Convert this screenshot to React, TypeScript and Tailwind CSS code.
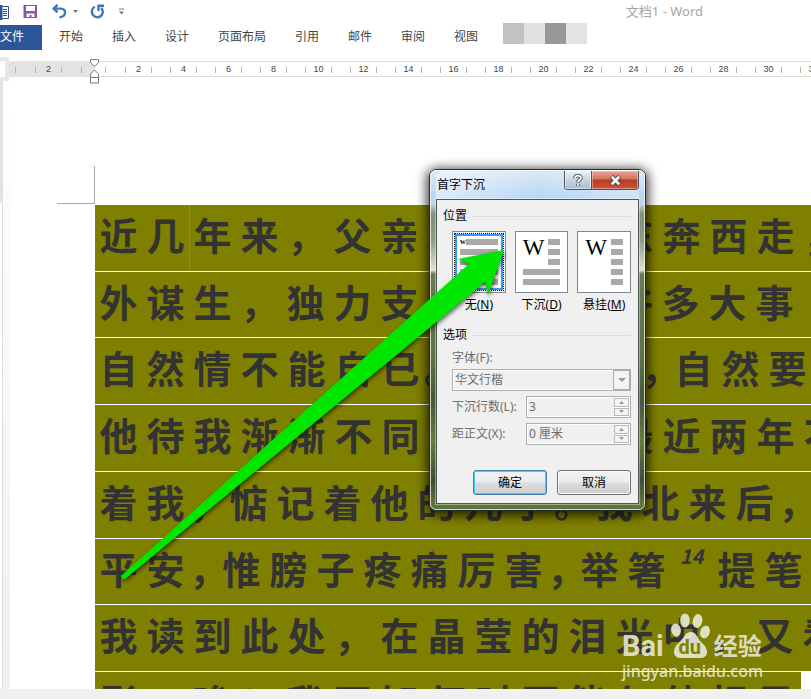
import React, { useState } from 'react';
import clsx from 'clsx';

const tabs = ['开始', '插入', '设计', '页面布局', '引用', '邮件', '审阅', '视图'];

const rulerMarks = [2, 4, 6, 8, 10, 12, 14, 16, 18, 20, 22, 24, 26, 28, 30, 32];

type Stop = 'wide' | 'medium' | 'narrow';

const lines: { text: string; stop: Stop; note?: string; rest?: string }[] = [
  { text: '近几年来，父亲和我都是东奔西走，', stop: 'wide' },
  { text: '外谋生，独力支持，做了许多大事', stop: 'wide' },
  { text: '自然情不能自已。情郁于中，自然要', stop: 'narrow' },
  { text: '他待我渐渐不同往日。但最近两年不', stop: 'wide' },
  { text: '着我，惦记着他的儿子。我北来后，', stop: 'medium' },
  { text: '平安，惟膀子疼痛厉害，举箸', stop: 'narrow', note: '14', rest: '提笔' },
  { text: '我读到此处，在晶莹的泪光中，又看', stop: 'wide' },
  { text: '影。唉！我不知何时再能与他相见', stop: 'wide' },
];

const positions = [
  { id: 'none', name: '无', key: 'N' },
  { id: 'dropped', name: '下沉', key: 'D' },
  { id: 'margin', name: '悬挂', key: 'M' },
];

function QuickAccess() {
  return (
    <div className="flex h-[23px] items-center">
      <svg className="h-4 w-[9px] shrink-0" viewBox="0 0 9 16" aria-hidden="true">
        <path d="M2.5 2.5h6v12h-6" fill="#fff" stroke="#2b579a" />
        <path d="M3 5.5h4M3 7.5h4M3 9.5h4M3 11.5h4" stroke="#2b579a" />
        <path d="M0 1h2.500v15H0z" fill="#2b579a" />
      </svg>
      <button type="button" aria-label="保存" className="ml-3.5 shrink-0">
        <svg width="15" height="15" viewBox="0 0 15 15">
          <path d="M.5 1h13.500v13H.5z" fill="#8757a8" />
          <path d="M3 2h9v5H3z" fill="#fff" />
          <path d="M3.500 9.500h8V13h-3v-2h-2v2h-3z" fill="#fff" />
        </svg>
      </button>
      <button type="button" aria-label="撤消" className="ml-3.5 flex shrink-0 items-center gap-1.5">
        <svg width="15" height="15" viewBox="0 0 15 15" fill="none" stroke="#3f76b5" strokeWidth="2.400">
          <path d="M5.500 .8L1.600 4.600l4 3.800M2 4.600h7c5.500 0 5.800 8.200-1.500 8.600" />
        </svg>
        <svg width="5" height="3" viewBox="0 0 5 3">
          <path d="M0 0h5L2.500 3z" fill="#777" />
        </svg>
      </button>
      <button type="button" aria-label="重复" className="ml-3 shrink-0">
        <svg width="15" height="15" viewBox="0 0 15 15" fill="none" stroke="#3f76b5" strokeWidth="2.400">
          <path d="M4.800 2.800a5.500 5.500 0 1 0 6.400 1" />
          <path d="M8.500 7V1.800H14" />
        </svg>
      </button>
      <button type="button" aria-label="自定义快速访问工具栏" className="ml-3.5 shrink-0">
        <svg width="5" height="7" viewBox="0 0 5 7">
          <path d="M0 1h5" stroke="#777" />
          <path d="M0 3.500h5L2.500 6.500z" fill="#777" />
        </svg>
      </button>
      <h1 className="ml-auto mr-[108px] text-[13px] whitespace-nowrap text-[#a6a6a6]">文档1 - Word</h1>
    </div>
  );
}

function Ribbon() {
  return (
    <nav className="flex h-[27px] items-end text-xs text-[#444]">
      <a href="#file" className="flex h-[25px] w-[42px] shrink-0 items-center bg-[#2b579a] pb-0.5 text-white">
        文件
      </a>
      <div className="flex h-[25px] shrink-0 items-center gap-[29px] pb-0.5 pl-[17px]">
        {tabs.map((tab) => (
          <a key={tab} href={`#${tab}`} className="whitespace-nowrap">
            {tab}
          </a>
        ))}
      </div>
      <div className="ml-[25px] flex h-[21px] shrink-0 self-start">
        <span className="w-[21px] bg-[#c2c2c2]" />
        <span className="w-[21px] bg-[#e1e1e1]" />
        <span className="w-[21px] bg-[#989898]" />
        <span className="w-[21px] bg-[#e3e3e3]" />
      </div>
    </nav>
  );
}

function RulerCell({ mark }: { mark: number }) {
  return (
    <span className="flex w-[45px] shrink-0 items-center justify-center gap-1">
      <i className="h-1.5 w-px bg-[#b5b5b5]" />
      <span className="w-[17px] text-center">{mark}</span>
      <i className="h-1.5 w-px bg-[#b5b5b5]" />
    </span>
  );
}

function Ruler() {
  return (
    <div className="relative mt-[7px] flex h-6 items-center font-['Liberation_Sans'] text-[9px] text-[#444]">
      <div className="h-6 w-[9px] shrink-0 border-4 border-l-0 border-[#e6e6e6] bg-white" />
      <div className="flex h-4 w-[86px] shrink-0 items-center bg-[#e3e3e3] pt-0.5">
        <i className="ml-1.5 mr-2.5 h-1.5 w-px bg-[#b5b5b5]" />
        <RulerCell mark={2} />
        <i className="ml-2.5 h-1.5 w-px bg-[#b5b5b5]" />
      </div>
      <div className="flex h-4 min-w-0 flex-1 items-center overflow-hidden border-y border-[#dedede] pt-0.5">
        <i className="ml-2.5 mr-2.5 h-1.5 w-px shrink-0 bg-[#b5b5b5]" />
        {rulerMarks.map((mark) => (
          <RulerCell key={mark} mark={mark} />
        ))}
      </div>
      <svg className="absolute left-[90px] top-0.5" width="9" height="25" viewBox="0 0 9 25" fill="#fff" stroke="#7a7a7a">
        <path d="M.5.5h8v3l-4 4-4-4z" />
        <path d="M.5 18.500v-3.500l4-4 4 4v3.500z" />
        <path d="M.5 18.500h8v5.500h-8z" />
      </svg>
    </div>
  );
}

// One cell per character, punctuation is compressed by the line's justification
function Run({ text, stop }: { text: string; stop: Stop }) {
  return (
    <>
      {Array.from(text).map((char, i) => {
        const isStop = char === '，' || char === '。';
        return (
          <span
            key={i}
            className={clsx(
              'shrink-0 text-center',
              !isStop && 'w-[47px]',
              isStop && stop === 'wide' && 'w-[46px]',
              isStop && stop === 'medium' && 'w-[36px]',
              isStop && stop === 'narrow' && 'w-[29px]'
            )}
          >
            {char}
          </span>
        );
      })}
    </>
  );
}

function Page() {
  return (
    <main className="flex min-h-0 flex-1 overflow-hidden bg-white">
      <div className="flex w-[3px] shrink-0 flex-col">
        <div className="h-[122px] bg-[#e3e3e3]" />
        <div className="flex-1 border-r border-[#dcdcdc]" />
      </div>
      <div className="w-[7px] shrink-0 bg-linear-to-b from-white to-[#f0f0f0]" />
      <article className="min-w-0 flex-1">
        <div className="ml-[47px] mt-[85px] h-[38px] w-[38px] border-r border-b border-[#aaa]" />
        <div className="ml-[85px] mt-px font-['Noto_Sans_CJK_SC',sans-serif] text-[38px] font-bold text-[#333]">
          {lines.map((line, i) => (
            <p
              key={i}
              className="flex h-[67px] items-start overflow-hidden border-b border-white bg-[#808000] leading-[58px] whitespace-nowrap last:mr-2.5 nth-[4n+2]:h-[66px]"
            >
              {i === 0 ? (
                <>
                  <Run text={line.text.slice(0, 2)} stop={line.stop} />
                  <i className="-mr-px h-full w-px shrink-0 bg-[#8080a8]" />
                  <Run text={line.text.slice(2)} stop={line.stop} />
                </>
              ) : (
                <Run text={line.text} stop={line.stop} />
              )}
              {line.note && (
                <sup className="top-0 w-[43px] shrink-0 text-center text-[20px] leading-[34px] italic">{line.note}</sup>
              )}
              {line.rest && <Run text={line.rest} stop={line.stop} />}
            </p>
          ))}
        </div>
      </article>
    </main>
  );
}

function Thumb({ id }: { id: string }) {
  const bar = 'h-1.5 bg-[#a9a9a9]';
  if (id === 'none') {
    return (
      <span className="block h-full p-px">
        <span className="block h-full border border-dotted border-black">
          <span className="flex h-full flex-col gap-1 border-2 border-[#3399ff] px-[3px] pt-[3px]">
            <span className="flex h-1.5 items-center">
              <b className="w-1.5 font-['Liberation_Serif'] text-[8px] leading-none text-black">w</b>
              <i className={clsx(bar, 'flex-1')} />
            </span>
            <i className={bar} />
            <i className={bar} />
            <i className={bar} />
            <i className={bar} />
          </span>
        </span>
      </span>
    );
  }
  return (
    <span className="flex h-full gap-1 px-[7px] pt-[7px]">
      <span className="flex flex-1 flex-col gap-1">
        <span className="flex h-[26px] justify-between">
          <span className="font-['Liberation_Serif'] text-[23px] leading-[18px] text-black">W</span>
          <span className="flex w-3 shrink-0 flex-col gap-1">
            <i className={bar} />
            <i className={bar} />
            <i className={bar} />
          </span>
        </span>
        <i className={clsx(bar, id === 'margin' && 'w-3 self-end')} />
        <i className={clsx(bar, id === 'margin' && 'w-3 self-end')} />
      </span>
    </span>
  );
}

function GroupTitle({ children }: { children: React.ReactNode }) {
  return (
    <h3 className="flex h-4 items-center gap-[5px] text-black">
      {children}
      <span className="h-px flex-1 bg-[#d5dfe5]" />
    </h3>
  );
}

function Spinner({ id, label, value }: { id: string; label: string; value: string }) {
  return (
    <div className="mt-[5px] flex h-[22px] items-center">
      <label htmlFor={id} className="w-[74px] shrink-0">
        {label}
      </label>
      <div className="flex h-[22px] min-w-0 flex-1 border border-[#abadb3] bg-white p-px">
        <input id={id} disabled defaultValue={value} className="min-w-0 flex-1 bg-[#f0f0f0] px-px text-[#6d6d6d]" />
        <div className="flex w-[15px] shrink-0 flex-col gap-px">
          <button type="button" disabled aria-label="增加" className="flex flex-1 items-center justify-center border border-[#b8b8b8] bg-[#f4f4f4]">
            <svg width="5" height="3" viewBox="0 0 5 3">
              <path d="M0 3h5L2.500 0z" fill="#999" />
            </svg>
          </button>
          <button type="button" disabled aria-label="减少" className="flex flex-1 items-center justify-center border border-[#b8b8b8] bg-[#f4f4f4]">
            <svg width="5" height="3" viewBox="0 0 5 3">
              <path d="M0 0h5L2.500 3z" fill="#999" />
            </svg>
          </button>
        </div>
      </div>
    </div>
  );
}

function DropCapDialog() {
  const [position, setPosition] = useState('none');

  return (
    <section
      role="dialog"
      aria-labelledby="drop-cap-title"
      className="absolute left-[429px] top-[169px] w-[217px] rounded-[7px] border border-[#26302a] bg-[linear-gradient(to_bottom,#dce9f6_0px,#b9d8f5_26px,#bfd6ec_34px,#81917a_44px,#909a84_70px,#dfe3d8_100px,#687a54_104px,#5c7442_190px,#46563c_230px,#64803e_270px,#3f4d38_310px,#5f7540_334px)] text-xs shadow-[0_2px_12px_2px_rgba(0,0,0,0.8)]"
    >
      <div className="rounded-md border border-white/70 px-[5px] pb-[5px]">
        <header className="flex h-7 justify-between rounded-t-md bg-linear-to-r from-white/50 via-transparent to-white/30 pl-px">
          <h2 id="drop-cap-title" className="self-center text-black">
            首字下沉
          </h2>
          <div className="flex h-[19px] overflow-hidden rounded-b border border-t-0 border-[#4c5663]">
            <button type="button" aria-label="帮助" className="flex w-[27px] items-center justify-center border-r border-[#4c5663] bg-linear-to-b from-[#e9f1f9] via-[#c6d3e1] to-[#aebfd3] shadow-[inset_0_0_0_1px_rgba(255,255,255,0.5)]">
              <svg width="10" height="13" viewBox="0 0 10 13" fill="none">
                <path d="M2 4.200C2 .8 8 .8 8 4c0 2-3 2-3 4.500M5 10v1.800" stroke="#48505c" strokeWidth="3.600" />
                <path d="M2 4.200C2 .8 8 .8 8 4c0 2-3 2-3 4.200M5 10v1.500" stroke="#fff" strokeWidth="1.800" />
              </svg>
            </button>
            <button type="button" aria-label="关闭" className="flex w-[46px] items-center justify-center bg-[linear-gradient(to_bottom,#e5a594_0%,#d5705b_45%,#b93a22_50%,#c8563c_100%)] shadow-[inset_0_0_0_1px_rgba(255,255,255,0.35)]">
              <svg width="13" height="11" viewBox="0 0 13 11" fill="none">
                <path d="M2.500 1.500l8 8M10.500 1.500l-8 8" stroke="#5a3a3a" strokeWidth="4.600" />
                <path d="M2.800 1.800l7.400 7.400M10.200 1.800L2.800 9.200" stroke="#f4f4f4" strokeWidth="2.800" />
              </svg>
            </button>
          </div>
        </header>

        <form className="border border-[#4b5a4c] bg-[#f0f0f0] py-2 pl-[6px] pr-[7px] text-[#6d6d6d] outline outline-white/40" onSubmit={(e) => e.preventDefault()}>
          <GroupTitle>位置</GroupTitle>
          <div className="mt-[7px] flex gap-[9px] pl-[9px]">
            {positions.map((p) => (
              <label key={p.id} className="flex min-w-0 flex-1 flex-col items-center text-black">
                <input
                  type="radio"
                  name="position"
                  className="sr-only"
                  checked={position === p.id}
                  onChange={() => setPosition(p.id)}
                />
                <span className="h-[62px] w-full border border-[#82878f] bg-white">
                  <Thumb id={p.id} />
                </span>
                <span className="mt-[3px] h-[18px] leading-[18px] whitespace-nowrap">
                  {p.name}(<u>{p.key}</u>)
                </span>
              </label>
            ))}
          </div>

          <div className="mt-[13px]">
            <GroupTitle>选项</GroupTitle>
          </div>
          <div className="pl-[9px]">
            <label htmlFor="font" className="mt-1.5 block h-[18px] leading-[18px]">
              字体(F):
            </label>
            <div className="mt-0.5 grid h-[22px] border border-[#abadb3] bg-white">
              <select id="font" disabled className="col-start-1 row-start-1 m-px appearance-none bg-[#f0f0f0] px-px text-[#6d6d6d]">
                <option>华文行楷</option>
              </select>
              <span className="pointer-events-none col-start-1 row-start-1 flex w-[17px] items-center justify-center justify-self-end border border-[#abadb3] bg-[#f4f4f4]">
                <svg width="8" height="4" viewBox="0 0 8 4">
                  <path d="M0 0h8L4 4z" fill="#999" />
                </svg>
              </span>
            </div>
            <Spinner id="line-count" label="下沉行数(L):" value="3" />
            <Spinner id="distance" label="距正文(X):" value="0 厘米" />
          </div>

          <div className="mt-[25px] flex justify-end gap-2.5 text-black">
            <button type="submit" className="h-[25px] w-[74px] rounded-[3px] border border-[#3c7fb1] bg-[linear-gradient(to_bottom,#f2f2f2_0%,#ebebeb_48%,#dcdcdc_52%,#cfcfcf_100%)] shadow-[inset_0_0_0_1px_#48cdf4]">
              确定
            </button>
            <button type="button" className="h-[25px] w-[74px] rounded-[3px] border border-[#707070] bg-[linear-gradient(to_bottom,#f2f2f2_0%,#ebebeb_48%,#dcdcdc_52%,#cfcfcf_100%)] shadow-[inset_0_0_0_1px_#fafafa]">
              取消
            </button>
          </div>
        </form>
      </div>
    </section>
  );
}

function Arrow() {
  return (
    <svg
      className="pointer-events-none absolute left-[118px] top-[246px] drop-shadow-[1px_2px_2px_rgba(0,0,0,0.6)]"
      width="390"
      height="338"
      viewBox="118 246 390 338"
      aria-hidden="true"
    >
      <path d="M504 250L458 259L469 264L122 575Q121 579 125 579L485 282L488 295Z" fill="#00e600" />
    </svg>
  );
}

function Watermark() {
  return (
    <div className="pointer-events-none absolute bottom-[18px] right-[46px] w-[143px] text-[#e9e9d8]/90">
      <div className="flex h-12 items-end font-bold">
        <span className="font-[Roboto] text-[29px] leading-[29px]">Bai</span>
        <span className="ml-1.5 grid h-[46px] w-[40px] shrink-0 self-start">
          <svg className="col-start-1 row-start-1" width="40" height="46" viewBox="0 0 40 46" fill="currentColor">
            <ellipse cx="6" cy="17" rx="4.800" ry="6.500" transform="rotate(-12 6 17)" />
            <ellipse cx="15" cy="7.500" rx="4.800" ry="7" />
            <ellipse cx="27.500" cy="8" rx="4.800" ry="7" transform="rotate(12 27.500 8)" />
            <ellipse cx="35" cy="19" rx="4.800" ry="6.500" transform="rotate(18 35 19)" />
            <path d="M21 19c-6 0-7 6-11 9.500C6 32 4 35 4 39c0 4 3 6 7 6h19c4 0 7-2 7-6 0-5-4-8-7-11-3-4-4-9-9-9z" />
          </svg>
          <span className="col-start-1 row-start-1 self-end justify-self-center font-[Roboto] text-[20px] leading-6 text-[#808000]">
            du
          </span>
        </span>
        <span className="ml-1 text-[24px] leading-[30px] whitespace-nowrap">经验</span>
      </div>
      <div className="font-['Noto_Sans'] text-[16px] leading-5 font-medium whitespace-nowrap">jingyan.baidu.com</div>
    </div>
  );
}

export default function App() {
  return (
    <div className="relative flex h-screen flex-col overflow-hidden bg-white font-['Noto_Sans','Noto_Sans_CJK_SC',sans-serif]">
      <QuickAccess />
      <Ribbon />
      <Ruler />
      <Page />
      <footer className="h-2.5 shrink-0 bg-[#f0f0f0]" />
      <DropCapDialog />
      <Arrow />
      <Watermark />
    </div>
  );
}
